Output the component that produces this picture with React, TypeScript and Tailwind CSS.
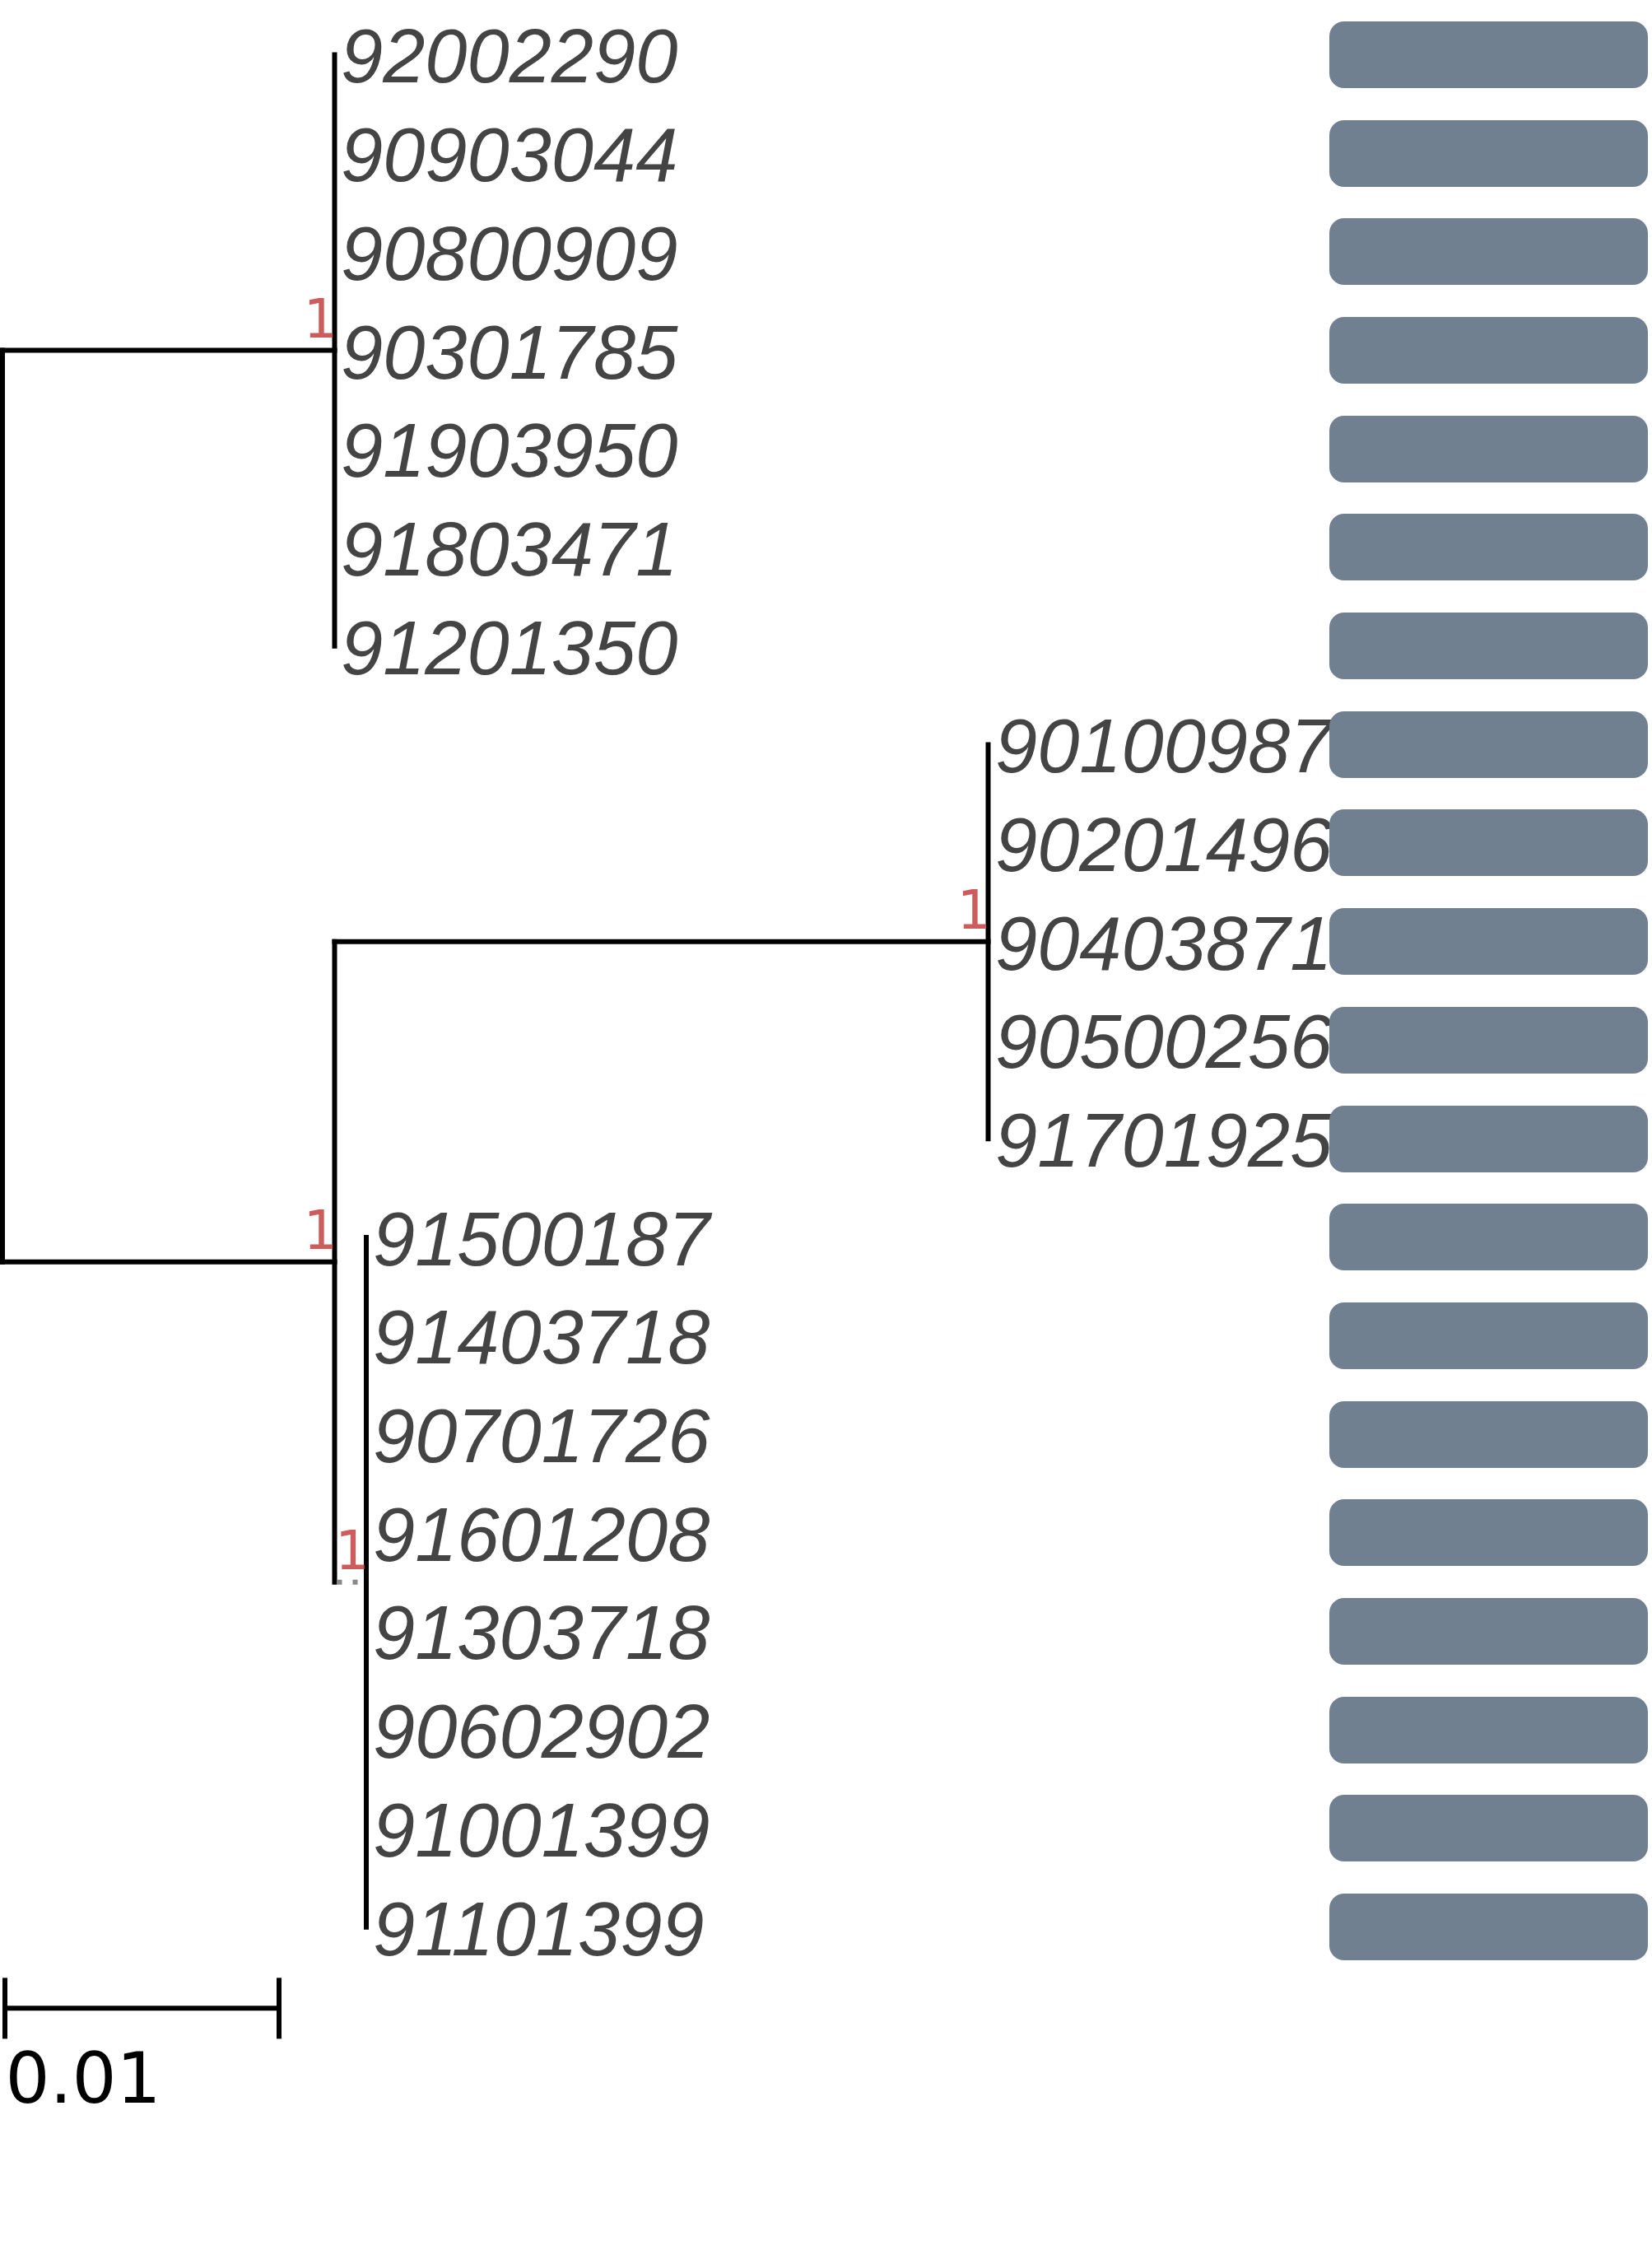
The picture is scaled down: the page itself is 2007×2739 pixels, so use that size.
import React from "react"

type Clade = "a" | "b1" | "b2"

const leaves: { name: string; clade: Clade }[] = [
  { name: "92002290", clade: "a" },
  { name: "90903044", clade: "a" },
  { name: "90800909", clade: "a" },
  { name: "90301785", clade: "a" },
  { name: "91903950", clade: "a" },
  { name: "91803471", clade: "a" },
  { name: "91201350", clade: "a" },
  { name: "90100987", clade: "b1" },
  { name: "90201496", clade: "b1" },
  { name: "90403871", clade: "b1" },
  { name: "90500256", clade: "b1" },
  { name: "91701925", clade: "b1" },
  { name: "91500187", clade: "b2" },
  { name: "91403718", clade: "b2" },
  { name: "90701726", clade: "b2" },
  { name: "91601208", clade: "b2" },
  { name: "91303718", clade: "b2" },
  { name: "90602902", clade: "b2" },
  { name: "91001399", clade: "b2" },
  { name: "91101399", clade: "b2" },
]

const labelPad: Record<Clade, string> = {
  a: "pl-[414px]",
  b1: "pl-[1209px]",
  b2: "pl-[453px]",
}

// row centre in page pixels
const rowY = (i: number) => 66.5 + 119.7 * i

const TreeLines = () => {
  const aMid = (rowY(0) + rowY(6)) / 2
  const b1Mid = (rowY(7) + rowY(11)) / 2
  const b2Mid = (rowY(12) + rowY(19)) / 2
  const bMid = (b1Mid + b2Mid) / 2
  const xA = 406.5
  const xB1 = 1200.5
  const xB2 = 445

  const support = [
    { x: xA, y: aMid },
    { x: xB1, y: b1Mid },
    { x: xA, y: bMid },
    { x: xB2, y: b2Mid },
  ]

  return (
    <svg
      className="absolute left-0 top-0 pointer-events-none"
      width={2007}
      height={2739}
      viewBox="0 0 2007 2739"
    >
      <g stroke="#000" strokeWidth={6} strokeLinecap="square" fill="none">
        <path d={`M3 ${aMid} V${bMid}`} />
        <path d={`M3 ${aMid} H${xA}`} />
        <path d={`M${xA} ${rowY(0)} V${rowY(6)}`} />
        <path d={`M3 ${bMid} H${xA}`} />
        <path d={`M${xA} ${b1Mid} V${b2Mid}`} />
        <path d={`M${xA} ${b1Mid} H${xB1}`} />
        <path d={`M${xB1} ${rowY(7)} V${rowY(11)}`} />
        <path d={`M${xB2} ${rowY(12)} V${rowY(19)}`} />
      </g>
      <line
        x1={409.5}
        x2={441}
        y1={b2Mid}
        y2={b2Mid}
        stroke="#888888"
        strokeWidth={6}
        strokeDasharray="6 13"
      />
      {support.map((s, i) => (
        <text
          key={i}
          x={s.x + 3.5}
          y={s.y - 16}
          textAnchor="end"
          fill="#cd5c5c"
          fontSize={65}
          fontFamily="'DejaVu Sans', sans-serif"
        >
          1
        </text>
      ))}
    </svg>
  )
}

export default function App() {
  return (
    <div className="relative w-[2007px] h-[2739px] bg-white overflow-hidden">
      <div className="flex flex-col pt-[6.65px]">
        {leaves.map((leaf) => (
          <div key={leaf.name} className="grid grid-cols-[1615px_387px] items-center h-[119.7px]">
            <span
              className={`${labelPad[leaf.clade]} block mt-[4px] whitespace-nowrap leading-none italic text-[92px] text-[#444444] font-['Liberation_Sans',Arial,sans-serif]`}
            >
              {leaf.name}
            </span>
            <div className="h-[81px] rounded-[18px] bg-[#708090]" />
          </div>
        ))}

        <svg width={345} height={80} viewBox="0 0 345 80" className="block">
          <g stroke="#000" strokeWidth={6}>
            <line x1={6} x2={339} y1={39.35} y2={39.35} />
            <line x1={6} x2={6} y1={2.35} y2={76.35} />
            <line x1={339} x2={339} y1={2.35} y2={76.35} />
          </g>
        </svg>
        <span className="block mt-[1.35px] pl-[6.4px] leading-none text-[85px] text-black font-['DejaVu_Sans',sans-serif]">
          0.01
        </span>
      </div>
      <TreeLines />
    </div>
  )
}
